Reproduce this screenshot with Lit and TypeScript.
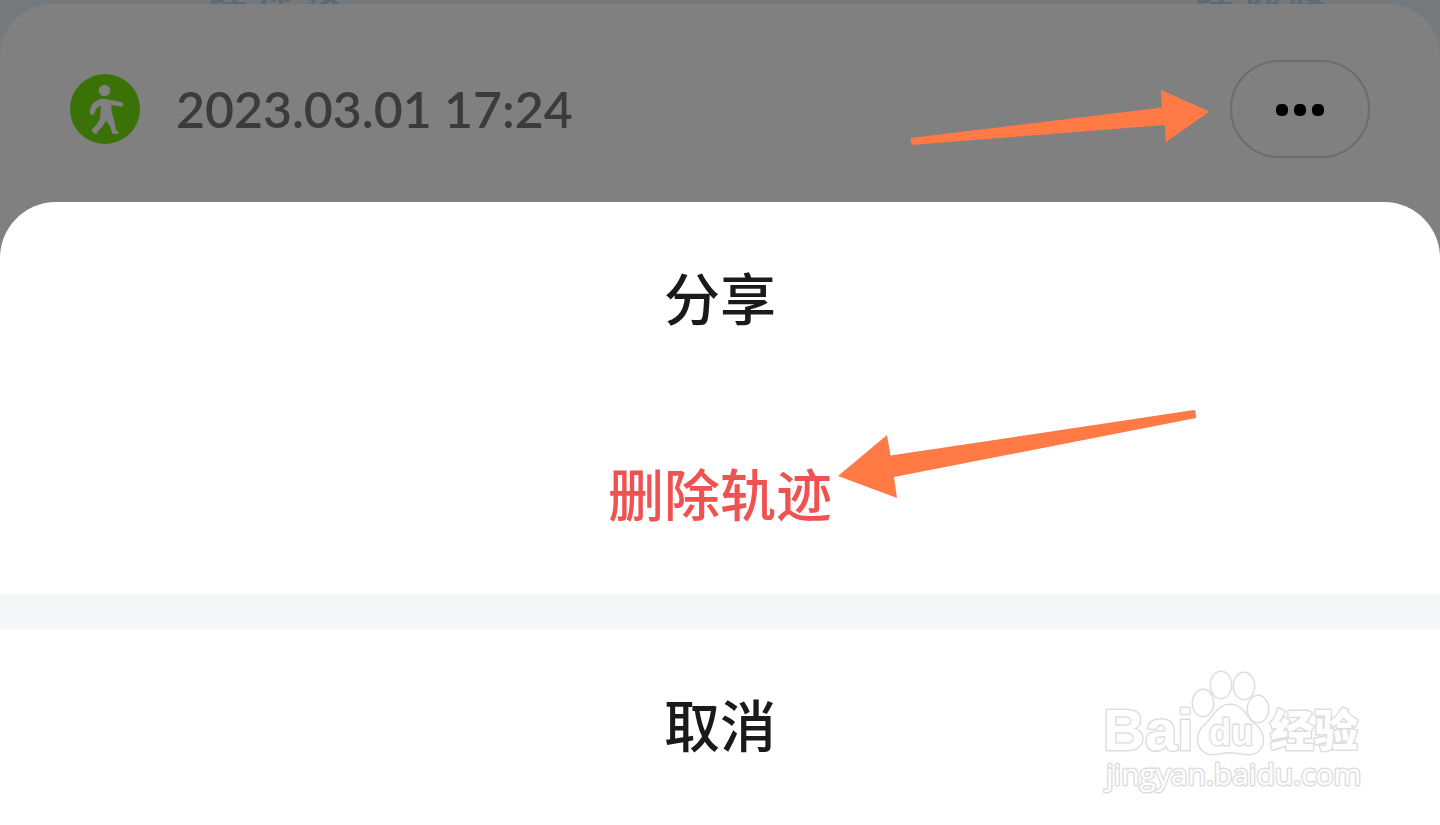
import { LitElement, html, svg, css } from "lit";
import { customElement } from "lit/decorators.js";

const walker = svg`
  <circle cx="35" cy="35" r="35" fill="#3a7207"/>
  <g fill="#808080">
    <circle cx="34.5" cy="16.500" r="5.700"/>
    <path d="M30 25 Q32 24.500 36 25 L51 28 Q54 29 53.300 31 Q52.500 33 50 32.600 L41 31 Q41.500 38 43.500 44 Q45.500 50 45.800 56.500 L48 57 Q49.500 58.500 48 60 L43 60 Q41.700 59.500 41.500 57 Q40.500 51.500 36 46.500 Q33.500 52.500 27.500 57.500 Q27.500 60.500 25.500 60.300 L21.500 57 Q21 55.500 22.500 54.800 Q28 50 30 44.500 L31 32 Q26 33 25 38 Q24.500 41 22 41 Q19.500 40.500 19.900 37 Q21 28 30 25Z"/>
  </g>`;

@customElement("app-root")
export class AppRoot extends LitElement {
  static styles = css`
    :host {
      display: block;
      font-family: "Noto Sans CJK SC", sans-serif;
    }
    * { box-sizing: border-box; }
    .page {
      min-height: 100vh;
      display: flex;
      flex-direction: column;
      position: relative;
      overflow: hidden;
      padding-top: 4px;
      background: #75797c;
    }
    .place {
      position: absolute;
      bottom: calc(100% - 6px);
      font-size: 38px;
      line-height: 38px;
      font-weight: 700;
      color: #606a73;
      white-space: pre;
    }
    .west { left: 209px; }
    .east { right: 113px; }
    .card {
      flex: 1;
      position: relative;
      display: flex;
      flex-direction: column;
      background: #808080;
      border-radius: 52px 52px 0 0;
    }
    .head {
      flex: 1;
      display: flex;
      align-items: center;
      padding: 22px 70px 10px;
      min-height: 198px;
    }
    .badge { width: 70px; height: 70px; flex: none; }
    .time {
      margin: 0 auto 0 36px;
      font: 600 50px/64px Lato, sans-serif;
      color: #3b3b3b;
    }
    .hint { flex: none; width: 300px; height: 56px; margin: 18px 20px 0 0; }
    .more {
      width: 140px;
      height: 98px;
      flex: none;
      padding: 2px 0 0;
      display: grid;
      place-items: center;
      border: 2px solid #6c6c6c;
      border-radius: 49px;
      background: none;
    }
    .dots { width: 48px; height: 12px; }
    .sheet {
      background: #fff;
      border-radius: 56px 56px 0 0;
      overflow: hidden;
    }
    .row {
      position: relative;
      display: block;
      width: 100%;
      height: 196px;
      padding: 0 0 8px;
      border: 0;
      background: none;
      font: 500 56px/84px "Noto Sans CJK SC", sans-serif;
      color: #1a1a1a;
    }
    .danger { color: #f05252; }
    .gap { height: 35px; background: #f5f6f8; }
    .pointer {
      position: absolute;
      left: calc(50% + 118px);
      top: 11px;
      width: 359px;
      height: 90px;
    }
    .foot { position: relative; }
    .mark {
      position: absolute;
      right: 70px;
      bottom: 24px;
      width: 270px;
      height: 135px;
      pointer-events: none;
    }
    .outline {
      fill: #fff;
      stroke: #dedede;
      stroke-width: 3px;
      paint-order: stroke;
      stroke-linejoin: round;
    }
    .latin { font: 700 58px "Liberation Sans", sans-serif; }
    .du { font: 700 36px "Liberation Sans", sans-serif; }
    .cjk { font: 900 44px "Noto Sans CJK SC", sans-serif; }
    .url { font: 400 30px "Open Sans", sans-serif; }
  `;

  render() {
    return html`
      <main class="page">
        <span class="place west" aria-hidden="true">经 师 教</span>
        <span class="place east" aria-hidden="true">经 优 腰</span>
        <section class="card">
          <header class="head">
            <svg class="badge" viewBox="0 0 70 70" aria-hidden="true">${walker}</svg>
            <h1 class="time">2023.03.01 17:24</h1>
            <svg class="hint" viewBox="0 0 300 56" aria-hidden="true">
              <path fill="#ff7a45" d="M0.500 48 L252 17.500 L251 0 L299.500 21.500 L256 52 L255 35 L1.500 55Z"/>
            </svg>
            <button class="more" aria-label="更多">
              <svg class="dots" viewBox="0 0 48 12" aria-hidden="true">
                <rect width="12" height="12" rx="5"/>
                <rect x="18" width="12" height="12" rx="5"/>
                <rect x="36" width="12" height="12" rx="5"/>
              </svg>
            </button>
          </header>
          <div class="sheet" role="dialog" aria-label="分享">
            <button class="row">分享</button>
            <button class="row danger">删除轨迹
              <svg class="pointer" viewBox="0 0 359 90" aria-hidden="true">
                <path fill="#ff7a45" d="M0 67 L49 26 L52.500 46.500 L356 1 Q358 1 358 9 L56 68 L59 89Z"/>
              </svg>
            </button>
            <div class="gap"></div>
            <div class="foot">
              <button class="row">取消</button>
              <svg class="mark" viewBox="0 0 270 135">
                <text class="outline latin" x="3" y="84">Bai</text>
                <g class="outline">
                  <ellipse cx="103" cy="37" rx="10" ry="13"/>
                  <ellipse cx="121" cy="19" rx="10" ry="13"/>
                  <ellipse cx="144" cy="20" rx="10" ry="13"/>
                  <ellipse cx="158" cy="43" rx="10" ry="13"/>
                  <path d="M130 39 C143 39 146 52 155 59 C168 69 164 88 149 88 C141 88 138 86 130 86 C122 86 119 88 111 88 C97 86 94 69 105 59 C114 52 117 39 130 39Z"/>
                </g>
                <text class="outline du" x="109" y="79">du</text>
                <text class="outline cjk" x="170" y="81">经验</text>
                <text class="outline url" x="6" y="119">jingyan.baidu.com</text>
              </svg>
            </div>
          </div>
        </section>
      </main>`;
  }
}
